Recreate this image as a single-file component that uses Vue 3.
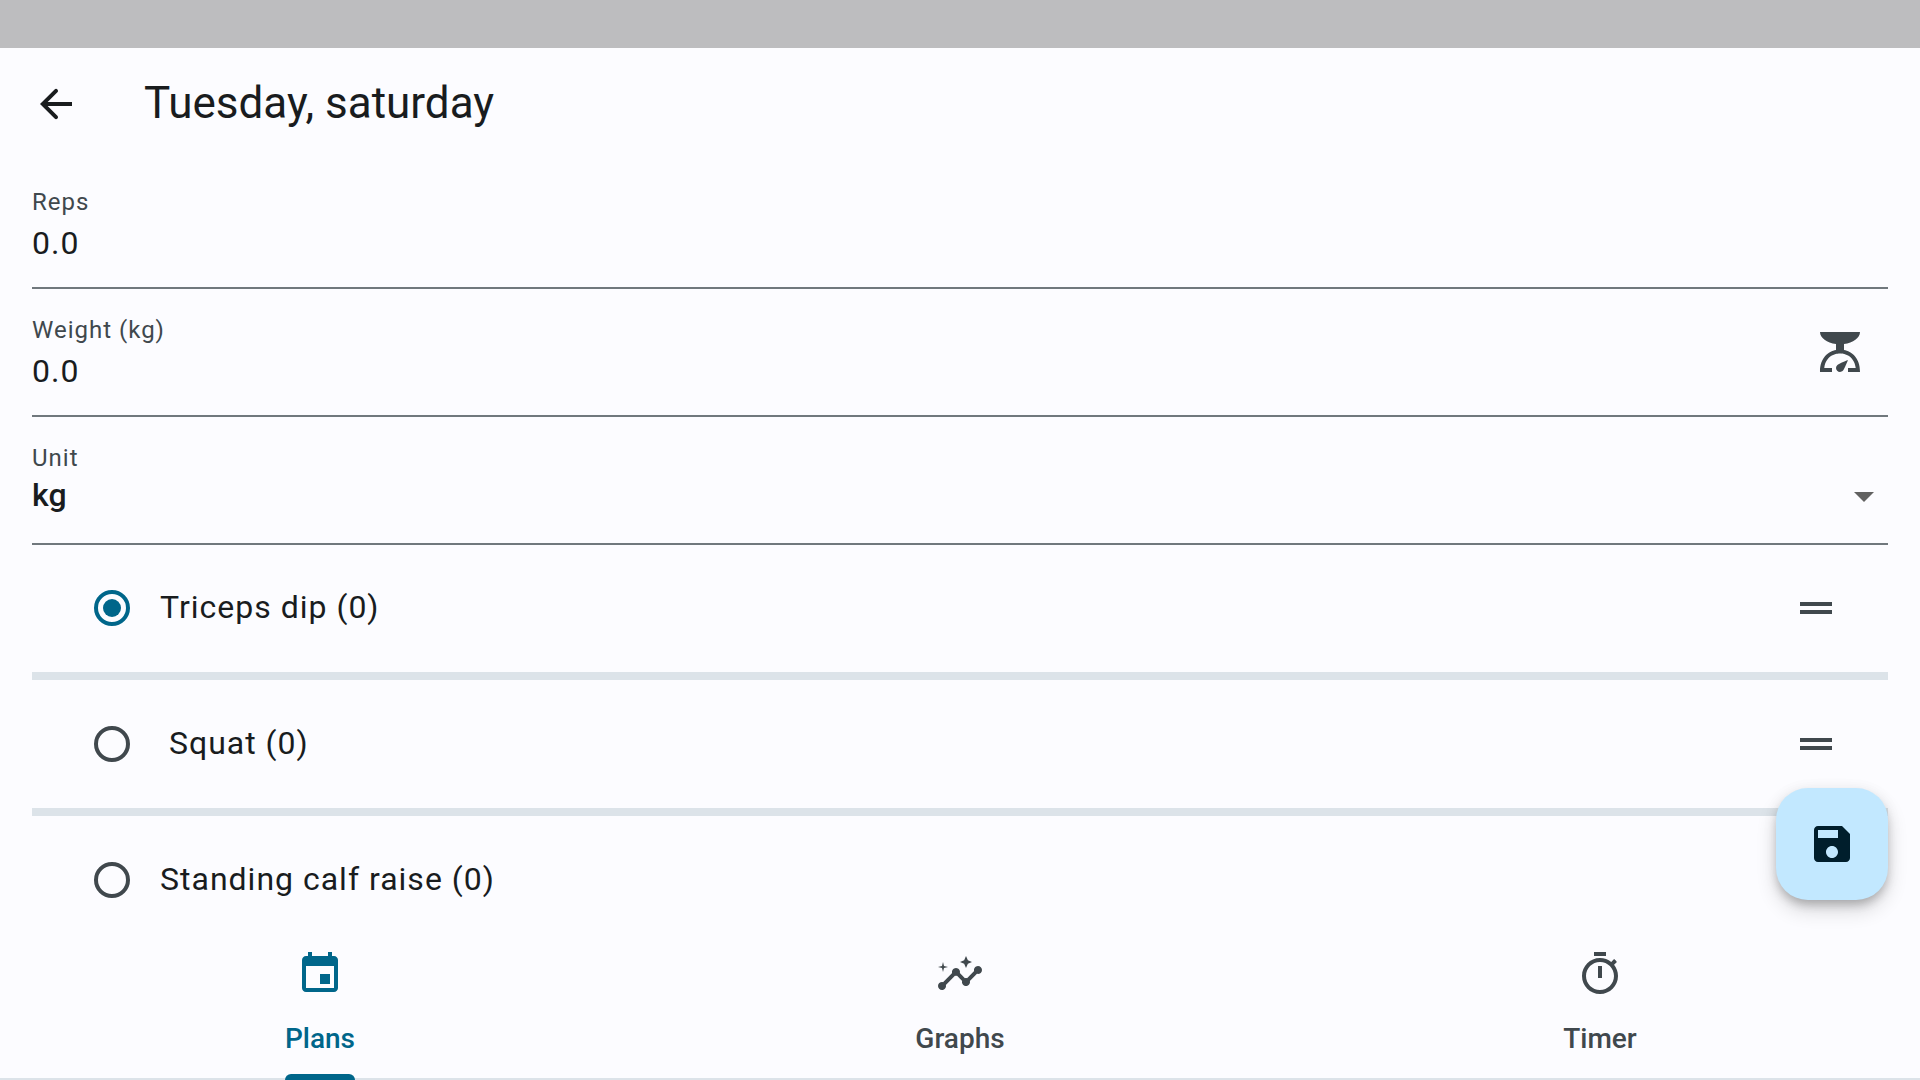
<script setup>
import { ref } from 'vue'

const reps = ref('0.0')
const weight = ref('0.0')
const unit = ref('kg')
const selected = ref(0)
const activeTab = ref('Plans')

const exercises = ['Triceps dip (0)', ' Squat (0)', 'Standing calf raise (0)']

const tabs = [
  {
    name: 'Plans',
    icon: 'M17 12h-5v5h5v-5zM16 1v2H8V1H6v2H5c-1.11 0-1.99.9-1.99 2L3 19c0 1.1.89 2 2 2h14c1.1 0 2-.9 2-2V5c0-1.1-.9-2-2-2h-1V1h-2zm3 18H5V8h14v11z',
  },
  {
    name: 'Graphs',
    icon: 'M21 8c-1.45 0-2.26 1.44-1.93 2.51l-3.55 3.56c-.3-.09-.74-.09-1.04 0l-2.55-2.55C12.27 10.45 11.46 9 10 9c-1.45 0-2.27 1.44-1.93 2.52l-4.56 4.55C2.44 15.74 1 16.55 1 18c0 1.1.9 2 2 2 1.45 0 2.26-1.44 1.93-2.51l4.55-4.56c.3.09.74.09 1.04 0l2.55 2.55C12.73 16.55 13.54 18 15 18c1.45 0 2.27-1.44 1.93-2.52l3.56-3.55C21.56 12.26 23 11.45 23 10c0-1.1-.9-2-2-2zM15 9l.94-2.07L18 6l-2.06-.93L15 3l-.92 2.07L12 6l2.08.93zM3.5 11L4 9l2-.5L4 8l-.5-2L3 8l-2 .5L3 9z',
  },
  {
    name: 'Timer',
    icon: 'M15 1H9v2h6V1zm-4 13h2V8h-2v6zm8.03-6.61l1.42-1.42c-.43-.51-.9-.99-1.41-1.41l-1.42 1.42C16.07 4.74 14.12 4 12 4c-4.97 0-9 4.03-9 9s4.02 9 9 9 9-4.03 9-9c0-2.12-.74-4.07-1.97-5.61zM12 20c-3.87 0-7-3.13-7-7s3.13-7 7-7 7 3.13 7 7-3.13 7-7 7z',
  },
]
</script>

<template>
  <div class="app">
    <div class="status-bar"></div>

    <header class="app-bar">
      <button class="icon-button" type="button" aria-label="Back">
        <svg class="icon" viewBox="0 0 24 24"><path d="M20 11H7.83l4.88-4.88c.39-.39.39-1.03 0-1.42-.39-.39-1.02-.39-1.41 0L4 12l7.3 7.3c.39.39 1.02.39 1.41 0 .39-.39.39-1.02 0-1.41L7.83 13H20v-2z" /></svg>
      </button>
      <h1 class="title">Tuesday, saturday</h1>
    </header>

    <main class="content">
      <form class="fields" @submit.prevent>
        <div class="field">
          <div class="field-body">
            <label class="field-label" for="reps">Reps</label>
            <input id="reps" v-model="reps" class="field-value" type="text" inputmode="decimal" />
          </div>
        </div>

        <div class="field">
          <div class="field-body">
            <label class="field-label" for="weight">Weight (kg)</label>
            <input id="weight" v-model="weight" class="field-value" type="text" inputmode="decimal" />
          </div>
          <button class="icon-button scale-button" type="button" aria-label="Use body weight">
            <svg class="icon" viewBox="0 0 24 24">
              <path d="M14 11V8c4.56-.58 8-3.1 8-6H2c0 2.9 3.44 5.42 8 6v3c-3.68.73-8 3.61-8 11h6v-2H4.13c.93-6.83 6.65-7.2 7.87-7.2s6.94.37 7.87 7.2H16v2h6c0-7.39-4.32-10.27-8-11z" />
              <path d="M12 22c-1.1 0-2-.9-2-2 0-.55.22-1.05.59-1.41C11.39 17.79 16 16 16 16s-1.79 4.61-2.59 5.41c-.36.37-.86.59-1.41.59z" />
            </svg>
          </button>
        </div>

        <div class="field">
          <div class="field-body">
            <label class="field-label" for="unit">Unit</label>
            <div class="select-row">
              <select id="unit" v-model="unit" class="field-select">
                <option value="kg">kg</option>
                <option value="lb">lb</option>
              </select>
              <svg class="icon select-arrow" viewBox="0 0 24 24" aria-hidden="true"><path d="M7 10l5 5 5-5z" /></svg>
            </div>
          </div>
        </div>
      </form>

      <ul class="exercises">
        <li v-for="(name, i) in exercises" :key="name" class="exercise">
          <div class="exercise-row">
            <input :id="`exercise-${i}`" v-model="selected" class="radio" type="radio" name="exercise" :value="i" />
            <label class="exercise-name" :for="`exercise-${i}`">{{ name }}</label>
            <button class="icon-button" type="button" aria-label="Reorder">
              <svg class="icon" viewBox="0 0 24 24"><path d="M20 9H4v2h16V9zM4 15h16v-2H4v2z" /></svg>
            </button>
          </div>
        </li>
      </ul>

      <button class="fab" type="button" aria-label="Save">
        <svg class="icon" viewBox="0 0 24 24"><path d="M17 3H5c-1.11 0-2 .9-2 2v14c0 1.1.89 2 2 2h14c1.1 0 2-.9 2-2V7l-4-4zm-5 16c-1.66 0-3-1.34-3-3s1.34-3 3-3 3 1.34 3 3-1.34 3-3 3zm3-10H5V5h10v4z" /></svg>
      </button>
    </main>

    <nav class="tabs">
      <button
        v-for="tab in tabs"
        :key="tab.name"
        class="tab"
        :class="{ active: tab.name === activeTab }"
        type="button"
        @click="activeTab = tab.name"
      >
        <svg class="icon" viewBox="0 0 24 24"><path :d="tab.icon" /></svg>
        <span class="tab-label">{{ tab.name }}</span>
      </button>
    </nav>
  </div>
</template>

<style>
body {
  margin: 0;
  background: #fcfcff;
}
</style>

<style scoped>
.app {
  display: flex;
  flex-direction: column;
  height: 100vh;
  overflow: hidden;
  background: #fcfcff;
  color: #191c1e;
  font-family: Roboto, "Liberation Sans", sans-serif;
}

button,
input,
select {
  margin: 0;
  padding: 0;
  border: 0;
  background: none;
  color: inherit;
  font: inherit;
}

.icon {
  display: block;
  width: 48px;
  height: 48px;
  fill: currentColor;
}

.icon-button {
  flex: none;
  color: #40484d;
}

.status-bar {
  flex: none;
  height: 48px;
  background: #bdbdbf;
}

.app-bar {
  flex: none;
  display: flex;
  align-items: center;
  gap: 64px;
  height: 112px;
  padding: 0 32px;
}

.app-bar .icon-button {
  color: #191c1e;
}

.title {
  margin: 0;
  padding-bottom: 2px;
  font-size: 44px;
  font-weight: 400;
  line-height: 56px;
}

.content {
  position: relative;
  flex: 1;
  min-height: 0;
  overflow: hidden;
  padding: 0 32px;
}

/* The underline straddles the lower edge of each field. */
.fields {
  padding-top: 1px;
  margin-bottom: -1px;
}

.field {
  box-sizing: border-box;
  display: flex;
  align-items: center;
  height: 128px;
  border-bottom: 2px solid #70787d;
}

.field-body {
  flex: 1;
  align-self: flex-start;
  display: flex;
  flex-direction: column;
  padding-top: 24px;
}

.field-label {
  color: #40484d;
  font-size: 24px;
  line-height: 34px;
  letter-spacing: 1px;
}

.field-value {
  height: 48px;
  font-size: 32px;
  line-height: 48px;
  letter-spacing: 1px;
}

.scale-button {
  padding: 0 24px;
}

.select-row {
  position: relative;
  display: flex;
  align-items: center;
  height: 48px;
}

.field-select {
  flex: 1;
  height: 40px;
  margin-bottom: 8px;
  appearance: none;
  font-size: 32px;
  font-weight: 500;
  line-height: 40px;
}

.select-arrow {
  position: absolute;
  right: 0;
  bottom: 3px;
  color: #616161;
  pointer-events: none;
}

.exercises {
  margin: 0;
  padding: 0;
  list-style: none;
}

.exercise {
  border-bottom: 8px solid #dce3e9;
}

.exercise-row {
  display: flex;
  align-items: center;
  height: 128px;
  padding: 0 48px 0 62px;
}

.radio {
  flex: none;
  box-sizing: border-box;
  display: grid;
  place-items: center;
  width: 36px;
  height: 36px;
  border: 4px solid #40484d;
  border-radius: 50%;
  appearance: none;
}

.radio:checked {
  border-color: #00668a;
}

.radio:checked::before {
  content: "";
  width: 18px;
  height: 18px;
  border-radius: 50%;
  background: #00668a;
}

.exercise-name {
  flex: 1;
  padding: 0 0 2px 30px;
  font-size: 32px;
  line-height: 48px;
  letter-spacing: 1px;
  white-space: pre;
}

.fab {
  position: absolute;
  right: 32px;
  bottom: 36px;
  display: grid;
  place-items: center;
  width: 112px;
  height: 112px;
  border-radius: 32px;
  background: #c2e8ff;
  color: #001e2c;
  box-shadow:
    0 6px 10px -2px rgba(0, 0, 0, 0.2),
    0 10px 20px rgba(0, 0, 0, 0.16),
    0 2px 16px rgba(0, 0, 0, 0.06);
}

.tabs {
  flex: none;
  display: flex;
  height: 144px;
  background: linear-gradient(#dce3e9, #dce3e9) bottom / 100% 2px no-repeat;
}

.tab {
  flex: 1;
  display: flex;
  flex-direction: column;
  align-items: center;
  gap: 20px;
  padding-top: 14px;
  color: #40484d;
}

.tab-label {
  position: relative;
  font-size: 28px;
  font-weight: 500;
  line-height: 42px;
}

.tab.active {
  color: #00668a;
}

.tab.active .tab-label::after {
  content: "";
  position: absolute;
  right: 0;
  bottom: -20px;
  left: 0;
  height: 6px;
  border-radius: 6px 6px 0 0;
  background: #00668a;
}
</style>
